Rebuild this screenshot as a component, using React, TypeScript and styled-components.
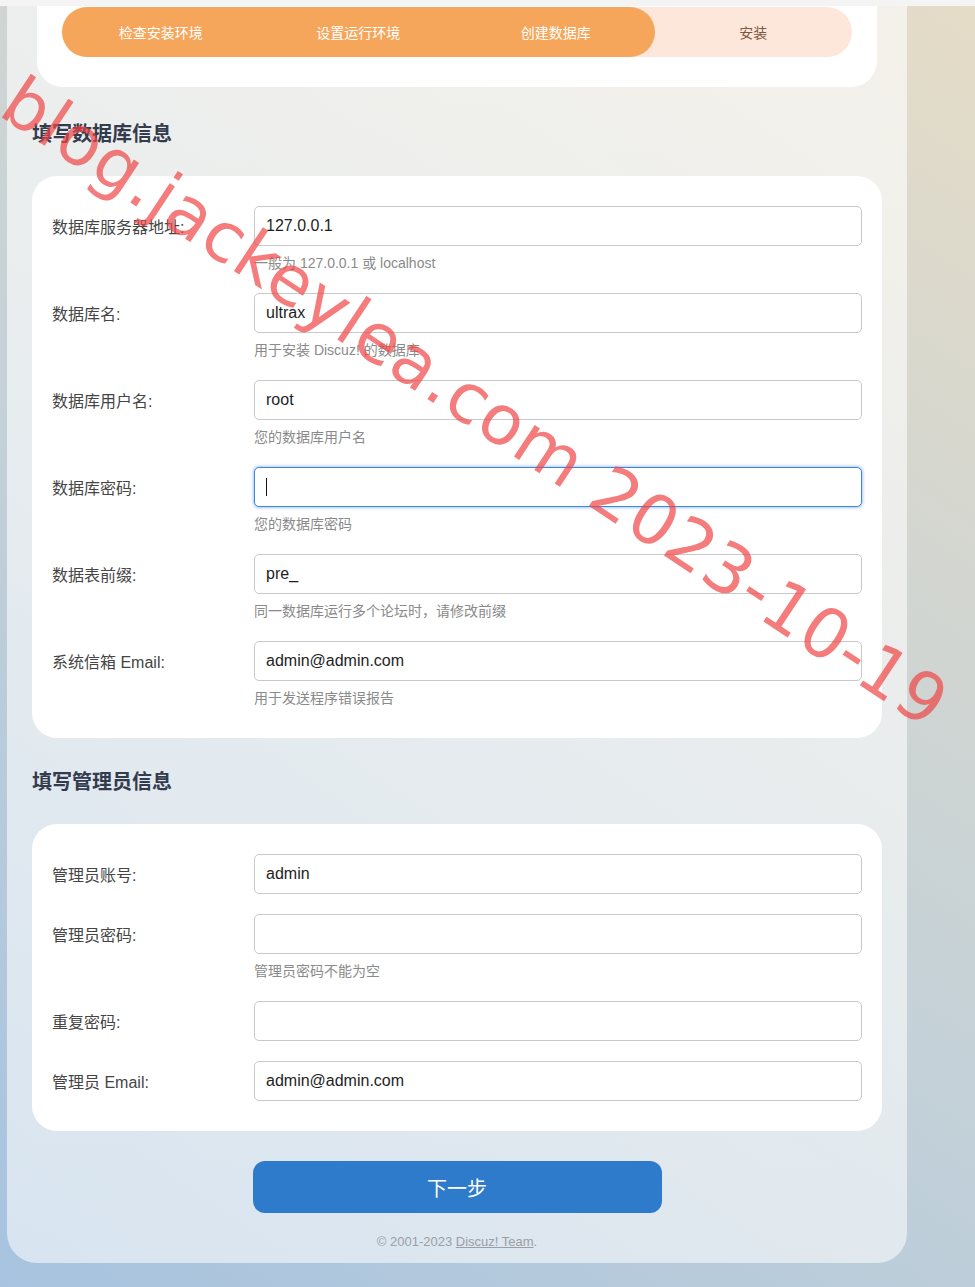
import styled, { createGlobalStyle } from 'styled-components'

const GlobalStyle = createGlobalStyle`
  html, body {
    margin: 0;
    padding: 0;
  }
  body {
    font-family: "Liberation Sans", "Noto Sans CJK SC", sans-serif;
    background: linear-gradient(35deg, #a7c3df 0%, #c4d1d8 45%, #e5dcc7 100%);
    min-height: 1287px;
  }
`

const steps = ['检查安装环境', '设置运行环境', '创建数据库']

const dbFields = [
  { label: '数据库服务器地址:', value: '127.0.0.1', hint: '一般为 127.0.0.1 或 localhost' },
  { label: '数据库名:', value: 'ultrax', hint: '用于安装 Discuz! 的数据库' },
  { label: '数据库用户名:', value: 'root', hint: '您的数据库用户名' },
  { label: '数据库密码:', value: '', hint: '您的数据库密码', focused: true },
  { label: '数据表前缀:', value: 'pre_', hint: '同一数据库运行多个论坛时，请修改前缀' },
  { label: '系统信箱 Email:', value: 'admin@admin.com', hint: '用于发送程序错误报告' },
]

const adminFields = [
  { label: '管理员账号:', value: 'admin' },
  { label: '管理员密码:', value: '', hint: '管理员密码不能为空' },
  { label: '重复密码:', value: '' },
  { label: '管理员 Email:', value: 'admin@admin.com' },
]

type Field = { label: string; value: string; hint?: string; focused?: boolean }

const FormRow = ({ field }: { field: Field }) => (
  <Row>
    <Label>{field.label}</Label>
    <InputWrap>
      <Input $focused={field.focused} defaultValue={field.value} readOnly />
      {field.focused && <Caret />}
    </InputWrap>
    {field.hint && <Hint>{field.hint}</Hint>}
  </Row>
)

export default function App() {
  return (
    <Page>
      <GlobalStyle />
      <TopEdge />
      <Container>
        <TopCard>
          <Steps>
            <DoneSteps>
              {steps.map((s) => (
                <Step key={s}>{s}</Step>
              ))}
            </DoneSteps>
            <Step $pending>安装</Step>
          </Steps>
        </TopCard>

        <SectionTitle $first>填写数据库信息</SectionTitle>
        <Card>
          {dbFields.map((f) => (
            <FormRow key={f.label} field={f} />
          ))}
        </Card>

        <SectionTitle>填写管理员信息</SectionTitle>
        <Card>
          {adminFields.map((f) => (
            <FormRow key={f.label} field={f} />
          ))}
        </Card>

        <NextButton type="button">下一步</NextButton>
        <Footer>
          © 2001-2023 <FooterLink href="#">Discuz! Team</FooterLink>.
        </Footer>
      </Container>

      <Watermark>blog.jackeylea.com 2023-10-19</Watermark>
    </Page>
  )
}

const Page = styled.div`
  position: relative;
  width: 975px;
  height: 1287px;
  overflow: hidden;
`

const TopEdge = styled.div`
  height: 6px;
  background: #f4f4f4;
`

const Container = styled.div`
  margin-left: 7px;
  width: 900px;
  box-sizing: border-box;
  padding: 0 25px 11px;
  background: linear-gradient(180deg, rgba(255, 255, 255, 0.62) 0%, rgba(255, 255, 255, 0.55) 100%);
  border-radius: 0 0 30px 30px;
  display: flex;
  flex-direction: column;
`

const TopCard = styled.div`
  margin: 0 5px;
  padding: 1px 25px 30px;
  background: #fff;
  border-radius: 0 0 26px 26px;
`

const Steps = styled.div`
  display: flex;
  height: 50px;
  border-radius: 25px;
  background: #fde6da;
`

const DoneSteps = styled.div`
  flex: 3;
  display: flex;
  background: #f6a65a;
  border-radius: 25px;
`

const Step = styled.div<{ $pending?: boolean }>`
  flex: 1;
  display: flex;
  align-items: center;
  justify-content: center;
  font-size: 14px;
  color: ${({ $pending }) => ($pending ? '#7b5a3e' : '#fff')};
`

const SectionTitle = styled.h2<{ $first?: boolean }>`
  margin: ${({ $first }) => ($first ? '33px' : '30px')} 0 28px;
  font-size: 20px;
  line-height: 28px;
  font-weight: bold;
  color: #333b4c;
`

const Card = styled.div`
  background: #fff;
  border-radius: 25px;
  padding: 30px 20px;
  display: flex;
  flex-direction: column;
  gap: 20px;
`

const Row = styled.div`
  display: grid;
  grid-template-columns: 202px 1fr;
`

const Label = styled.label`
  display: flex;
  align-items: center;
  height: 40px;
  font-size: 16px;
  color: #454545;
`

const InputWrap = styled.div`
  position: relative;
`

const Input = styled.input<{ $focused?: boolean }>`
  display: block;
  width: 100%;
  height: 40px;
  box-sizing: border-box;
  padding: 0 11px;
  font-family: "Liberation Sans", "Noto Sans CJK SC", sans-serif;
  font-size: 16px;
  color: #1e1e1e;
  background: #fff;
  border-radius: 5px;
  outline: none;
  border: 1px solid ${({ $focused }) => ($focused ? '#3f86dc' : '#c9c9c9')};
  box-shadow: ${({ $focused }) => ($focused ? '0 0 3px 1px rgba(63, 134, 220, 0.45)' : 'none')};
`

const Caret = styled.span`
  position: absolute;
  left: 12px;
  top: 11px;
  width: 1px;
  height: 18px;
  background: #111;
`

const Hint = styled.div`
  grid-column: 2;
  margin-top: 8px;
  font-size: 14px;
  line-height: 19px;
  color: #8a8a8a;
`

const NextButton = styled.button`
  margin: 30px auto 0;
  width: 409px;
  height: 52px;
  border: none;
  border-radius: 12px;
  background: #2e7bcc;
  color: #fff;
  font-family: "Liberation Sans", "Noto Sans CJK SC", sans-serif;
  font-size: 20px;
  cursor: pointer;
`

const Footer = styled.div`
  margin-top: 19px;
  text-align: center;
  font-size: 13px;
  line-height: 20px;
  color: #9a9ea5;
`

const FooterLink = styled.a`
  color: #9a9ea5;
  text-decoration: underline;
`

const Watermark = styled.div`
  position: absolute;
  left: 10px;
  top: 54px;
  transform: rotate(33.5deg);
  transform-origin: 0 50%;
  white-space: nowrap;
  font-family: "DejaVu Sans", sans-serif;
  font-size: 69px;
  letter-spacing: 1px;
  color: rgba(240, 68, 68, 0.7);
  pointer-events: none;
`
